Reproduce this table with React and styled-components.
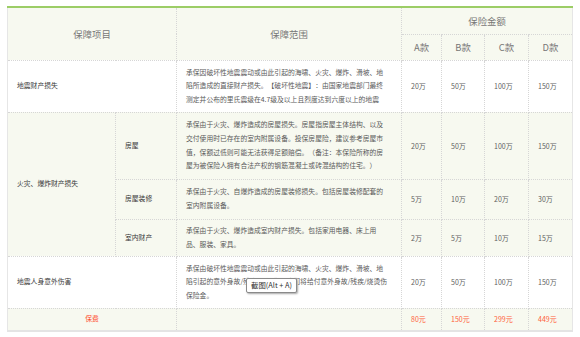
import React from "react";
import styled, { createGlobalStyle, css } from "styled-components";

const GlobalStyle = createGlobalStyle`
  body {
    margin: 0;
    background: #ffffff;
    font-family: "Noto Sans CJK SC", "Noto Sans", sans-serif;
    text-spacing-trim: space-all;
  }
`;

const Wrapper = styled.div`
  padding: 6px 8px 0 7px;
`;

const Table = styled.table`
  width: 565px;
  table-layout: fixed;
  border-collapse: collapse;
  border-top: 2px solid #9ccd66;
  border-left: 1px solid #e6e6e6;
  border-right: 1px solid #e6e6e6;
  border-bottom: 2px solid #e4e4e4;
  color: #666;
`;

const Row = styled.tr`
  height: ${props => props.$h}px;
  background: ${props => (props.$tint ? "#f7f9f0" : "#ffffff")};
`;

const HeadCell = styled.th`
  font-weight: normal;
  font-size: 9.4px;
  color: #777;
  text-align: center;
  vertical-align: middle;
  border: 1px dotted #d6d6d6;
  padding: 0;
`;

const Cell = styled.td`
  border: 1px dotted #d6d6d6;
  vertical-align: middle;
  font-size: 6.8px;
  line-height: 2;
  padding: 0 9px;
`;

const Label = styled(Cell)`
  color: #383838;
  ${props =>
    props.$center &&
    css`
      text-align: center;
    `};
`;

const Scope = styled(Cell)`
  padding: 3px 12px 3px 9px;
  color: #5a5a5a;
  text-spacing-trim: space-all;
  line-break: strict;
`;

const Amount = styled(Cell)`
  color: #606060;
  font-size: 7px;
`;

const Fee = styled(Amount)`
  color: #ff5e3a;
`;

const FeeLabel = styled(Label)`
  color: #ff4a2a;
  text-align: center;
`;

const Anchor = styled.div`
  position: relative;
`;

const Tooltip = styled.span`
  position: absolute;
  left: 60px;
  top: 16px;
  padding: 0 4px;
  height: 13px;
  line-height: 12px;
  font-size: 7.4px;
  color: #333;
  background: #fff;
  border: 1px solid #8a8a8a;
  border-radius: 2px;
  box-shadow: 1px 1px 2px rgba(0, 0, 0, 0.35);
  white-space: nowrap;
`;

const widths = [108, 61, 225, 40, 43, 44, 44];

const rows = [
  {
    label: "地震财产损失",
    scope:
      "承保因破坏性地震震动或由此引起的海啸、火灾、爆炸、滑坡、地陷所造成的直接财产损失。【破坏性地震】：由国家地震部门最终测定并公布的里氏震级在4.7级及以上且烈度达到六度以上的地震",
    amounts: ["20万", "50万", "100万", "150万"],
    h: 52,
  },
];

const fire = [
  {
    sub: "房屋",
    scope:
      "承保由于火灾、爆炸造成的房屋损失。房屋指房屋主体结构、以及交付使用时已存在的室内附属设备。投保房屋险，建议参考房屋市值，保额过低则可能无法获得足额赔偿。（备注：本保险所称的房屋为被保险人拥有合法产权的钢筋混凝土或砖混结构的住宅。）",
    amounts: ["20万", "50万", "100万", "150万"],
    h: 67,
  },
  {
    sub: "房屋装修",
    scope: "承保由于火灾、自爆炸造成的房屋装修损失。包括房屋装修配套的室内附属设备。",
    amounts: ["5万", "10万", "20万", "30万"],
    h: 40,
  },
  {
    sub: "室内财产",
    scope: "承保由于火灾、爆炸造成室内财产损失。包括家用电器、床上用品、服装、家具。",
    amounts: ["2万", "5万", "10万", "15万"],
    h: 37,
  },
];

const fees = ["80元", "150元", "299元", "449元"];

export default function App() {
  return (
    <Wrapper>
      <GlobalStyle />
      <Table>
        <colgroup>
          {widths.map((w, i) => (
            <col key={i} style={{ width: w }} />
          ))}
        </colgroup>
        <thead>
          <Row $tint $h={27}>
            <HeadCell colSpan={2} rowSpan={2}>保障项目</HeadCell>
            <HeadCell rowSpan={2}>保障范围</HeadCell>
            <HeadCell colSpan={4}>保险金额</HeadCell>
          </Row>
          <Row $tint $h={26}>
            <HeadCell>A款</HeadCell>
            <HeadCell>B款</HeadCell>
            <HeadCell>C款</HeadCell>
            <HeadCell>D款</HeadCell>
          </Row>
        </thead>
        <tbody>
          {rows.map(r => (
            <Row key={r.label} $h={r.h}>
              <Label colSpan={2}>{r.label}</Label>
              <Scope>{r.scope}</Scope>
              {r.amounts.map((a, i) => (
                <Amount key={i}>{a}</Amount>
              ))}
            </Row>
          ))}
          {fire.map((r, idx) => (
            <Row key={r.sub} $tint $h={r.h}>
              {idx === 0 && <Label rowSpan={3}>火灾、爆炸财产损失</Label>}
              <Label>{r.sub}</Label>
              <Scope>{r.scope}</Scope>
              {r.amounts.map((a, i) => (
                <Amount key={i}>{a}</Amount>
              ))}
            </Row>
          ))}
          <Row $h={52}>
            <Label colSpan={2}>地震人身意外伤害</Label>
            <Scope>
              <Anchor>
                承保由破坏性地震震动或由此引起的海啸、火灾、爆炸、滑坡、地陷引起的意外身故/残疾/烧烫伤，我们将给付意外身故/残疾/烧烫伤保险金。
                <Tooltip>截图(Alt + A)</Tooltip>
              </Anchor>
            </Scope>
            {["20万", "50万", "100万", "150万"].map((a, i) => (
              <Amount key={i}>{a}</Amount>
            ))}
          </Row>
          <Row $tint $h={23}>
            <FeeLabel colSpan={2}>保费</FeeLabel>
            <Cell />
            {fees.map((f, i) => (
              <Fee key={i}>{f}</Fee>
            ))}
          </Row>
        </tbody>
      </Table>
    </Wrapper>
  );
}
